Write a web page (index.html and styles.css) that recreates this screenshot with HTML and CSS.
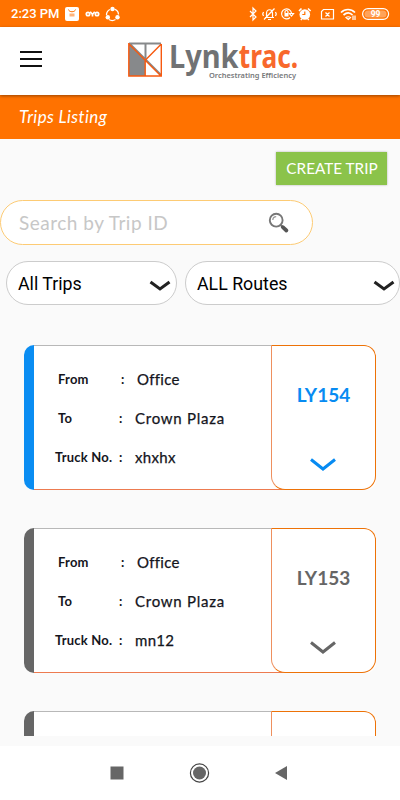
FILE: index.html
```html
<!DOCTYPE html>
<html lang="en">
<head>
<meta charset="utf-8">
<title>Trips Listing</title>
<link rel="stylesheet" href="styles.css">
</head>
<body>
<div class="status">
  <span class="time">2:23 PM</span>
  <svg class="s-left" width="56" height="16" viewBox="0 0 56 16">
    <rect x="1" y="1" width="14" height="14" rx="2" fill="#fff"/>
    <path d="M4.500 3.500c.5 3 6.500 3 7 0" fill="none" stroke="#ff7200" stroke-width="1"/>
    <rect x="5.500" y="7.500" width="5" height="3" fill="#ffb37a"/>
    <g fill="none" stroke="#fff" stroke-width="1.700"><circle cx="24" cy="8" r="1.700"/><path d="M26.200 5.800l2.300 2.700 2.200-2.700M28.500 8v2.500"/><circle cx="33" cy="8" r="1.700"/></g>
    <g fill="none" stroke="#fff" stroke-width="1.300"><path d="M50.500 3.200a6 6 0 0 1 4 5.300M42.500 9a6 6 0 0 1 3.500-5.500M45 13.500a6 6 0 0 0 6.500 0"/></g>
    <circle cx="48.500" cy="3" r="2.200" fill="#fff"/><circle cx="43.800" cy="11.300" r="2.200" fill="#fff"/><circle cx="53.500" cy="11.300" r="2.200" fill="#fff"/>
  </svg>
  <svg class="s-right" width="142" height="16" viewBox="0 0 142 16">
    <g fill="none" stroke="#fff" stroke-width="1.200">
      <path d="M2 5l6 6-3 3V2l3 3-6 6"/>
      <path d="M17 11.500h9M18.500 11V7.500c0-5 6-5 6 0V11M20 13.500h3M16 13.500L26.500 2.500M15.500 6l-.8 2 .8 2M27.500 6l.8 2-.8 2"/>
      <path d="M42 11.500a5 5 0 1 1 1.500-4.500M41.500 7.500h4l-2 2.500z"/>
      <path d="M37 7V6c0-2 3-2 3 0v1"/>
      <path d="M75.500 3.500h10v9.500h-12V5.500zM77.500 6.500l4 4M81.500 6.500l-4 4"/>
      <path d="M93 6.500c4-4 10-4 14 0M95.500 9c3-2.700 6.500-2.700 9 0" stroke-width="1.700"/>
      <path d="M98 11.500c1.500-1 3-1 4.500 0l-2.200 2zM105 9.500v4.500M107 9.500v4.500"/>
      <rect x="114.600" y="2.600" width="26" height="10.800" rx="5.400"/>
    </g>
    <rect x="36.500" y="7" width="4" height="3.500" fill="#fff"/>
    <circle cx="56.800" cy="8.500" r="5.300" fill="#fff"/>
    <path d="M56.800 5.500v3h-2.500" fill="none" stroke="#ff7200" stroke-width="1.200"/>
    <path d="M51 5l2.500-2.500M62.600 5L60 2.500M52.800 14l1-1M60.800 14l-1-1" stroke="#fff" stroke-width="1.600"/>
    <rect x="116.500" y="4.500" width="22" height="7" rx="3.500" fill="#ffa35a"/>
    <text x="127.600" y="11.200" text-anchor="middle" class="battery">99</text>
  </svg>
</div>
<header class="header">
  <div class="menu"><i></i><i></i><i></i></div>
  <div class="logo">
    <svg width="35" height="36" viewBox="0 0 35 36">
      <path d="M1 2v32h16V18z" fill="#87898b"/>
      <path d="M1 1.500h32M17.500 2v17M2 2l31 31" fill="none" stroke="#87898b" stroke-width="2"/>
      <path d="M.800 1v33h32.500V2M17.200 18v16M1 2l32 32M17 18.500L33.300 2" fill="none" stroke="#f7590f" stroke-width="1.400"/>
    </svg>
    <svg class="brand" width="132" height="46" viewBox="0 0 132 46">
      <text x="0" y="29.500" class="word" textLength="69.500" lengthAdjust="spacingAndGlyphs">Lynk</text>
      <text x="69.700" y="29.500" class="word hot" textLength="59.500" lengthAdjust="spacingAndGlyphs">trac.</text>
      <text x="40" y="40" class="tag" textLength="87" lengthAdjust="spacingAndGlyphs">Orchestrating Efficiency</text>
    </svg>
  </div>
</header>
<div class="titlebar"><span>Trips Listing</span></div>
<main class="content">
  <button class="create">CREATE TRIP</button>
  <div class="search">
    <span>Search by Trip ID</span>
    <svg width="22" height="22" viewBox="0 0 22 22"><path d="M12.500 13l2.500 2" stroke="#777" stroke-width="2"/><circle cx="8.200" cy="8.200" r="6.400" fill="#fff" stroke="#777" stroke-width="1.900"/><path d="M4.800 8a3.500 3.500 0 0 1 3.400-3.300" fill="none" stroke="#999" stroke-width="1.300"/><path d="M14.800 15.200l3.600 3.300" stroke="#555" stroke-width="3.800" stroke-linecap="round"/></svg>
  </div>
  <div class="filters">
    <div class="select first"><span>All Trips</span><svg width="22" height="12" viewBox="0 0 22 12"><path d="M1.500 2L11 9l9.500-7"/></svg></div>
    <div class="select second"><span>ALL Routes</span><svg width="22" height="12" viewBox="0 0 22 12"><path d="M1.500 2L11 9l9.500-7"/></svg></div>
  </div>
  <div class="list">
    <article class="card active">
      <div class="rows">
        <div class="row from"><b>From</b><b>:</b><span>Office</span></div>
        <div class="row to"><b>To</b><b>:</b><span class="plaza">Crown Plaza</span></div>
        <div class="row truck"><b>Truck No.</b><b>:</b><span>xhxhx</span></div>
      </div>
      <div class="trip"><strong>LY154</strong><svg width="26" height="14" viewBox="0 0 26 14"><path d="M1 1.500L13 11l12-9.500"/></svg></div>
    </article>
    <article class="card">
      <div class="rows">
        <div class="row from"><b>From</b><b>:</b><span>Office</span></div>
        <div class="row to"><b>To</b><b>:</b><span class="plaza">Crown Plaza</span></div>
        <div class="row truck"><b>Truck No.</b><b>:</b><span>mn12</span></div>
      </div>
      <div class="trip"><strong>LY153</strong><svg width="26" height="14" viewBox="0 0 26 14"><path d="M1 1.500L13 11l12-9.500"/></svg></div>
    </article>
    <article class="card">
      <div class="rows"></div>
      <div class="trip"></div>
    </article>
  </div>
</main>
<nav class="nav">
  <svg width="14" height="14"><rect x=".5" y=".5" width="13" height="13" fill="#666"/></svg>
  <svg width="20" height="20"><circle cx="10.500" cy="10" r="9.100" fill="none" stroke="#444" stroke-width="1.200"/><circle cx="10.500" cy="10" r="6.500" fill="#666"/></svg>
  <svg width="14" height="16"><path d="M13 1v14L1 8z" fill="#666"/></svg>
</nav>
</body>
</html>
```

FILE: styles.css
```css
* { box-sizing: border-box; }
body {
  margin: 0;
  width: 400px;
  height: 800px;
  overflow: hidden;
  display: flex;
  flex-direction: column;
  background: #fafafa;
  font-family: Lato, "Open Sans", sans-serif;
  font-variant-ligatures: none;
  color: #14151c;
}
svg { display: block; flex: none; overflow: visible; }
.status {
  height: 27px;
  flex: none;
  display: flex;
  align-items: center;
  padding: 1px 10px 0 11px;
  background: #ff7200;
  color: #fff;
}
.time { width: 53px; font: 500 13px/16px Roboto, sans-serif; white-space: nowrap; }
.s-right { margin-left: auto; }
.battery { font: 700 8.5px Roboto, sans-serif; fill: #fff; }
.header {
  height: 68px;
  flex: none;
  display: flex;
  background: #fff;
  box-shadow: 0 1px 3px rgba(0, 0, 0, .4);
  position: relative;
}
.menu {
  margin: 24px 0 0 20px;
  width: 22px;
  height: 16px;
  display: flex;
  flex-direction: column;
  justify-content: space-between;
}
.menu i { height: 2px; background: #111; }
.logo { display: flex; margin: 15px 0 0 86px; }
.brand { margin: -4px 0 0 6px; }
.word { font: 700 32px "Noto Sans", sans-serif; fill: #707274; }
.hot { fill: #f8682c; }
.tag { font: 600 7.5px "Noto Sans", sans-serif; fill: #77797b; }
.titlebar {
  height: 44px;
  flex: none;
  padding: 11px 19px;
  background: #ff7200;
  color: #fff;
  font-size: 17px;
  line-height: 21px;
  font-style: italic;
  letter-spacing: .4px;
}
.content { flex: 1; min-height: 0; padding-top: 13px; display: flex; flex-direction: column; }
.create {
  align-self: flex-end;
  flex: none;
  width: 111px;
  height: 33px;
  margin-right: 13px;
  padding: 0 0 2px 1px;
  border: 0;
  background: #8bc34a;
  box-shadow: 0 0 2px rgba(0, 0, 0, .3);
  color: #fff;
  font: 400 15.3px Lato, sans-serif;
}
.search {
  flex: none;
  width: 313px;
  height: 45px;
  margin-top: 15px;
  padding: 0 22px 0 18px;
  display: flex;
  align-items: center;
  justify-content: space-between;
  border: 1px solid #fdcb74;
  border-radius: 23px;
  background: #fff;
  color: #c7c7c7;
  font-size: 19px;
  letter-spacing: .5px;
}
.filters { display: flex; gap: 8px; padding-left: 6px; margin-top: 16px; flex: none; }
.select {
  height: 44px;
  border: 1px solid #ccc;
  border-radius: 22px;
  background: #fff;
  display: flex;
  align-items: center;
  justify-content: space-between;
  padding: 1px 5px 0 11px;
  font: 400 17.8px Roboto, sans-serif;
  color: #000;
}
.select svg { margin-top: 5px; }
.select path { fill: none; stroke: #222; stroke-width: 3; }
.first { width: 171px; }
.second { width: 215px; padding-right: 4px; }
.list {
  margin-top: 40px;
  height: 391px;
  flex: none;
  overflow: hidden;
  padding: 0 24px;
  display: flex;
  flex-direction: column;
  gap: 38px;
}
.card {
  height: 145px;
  flex: none;
  display: flex;
  overflow: hidden;
  border-radius: 10px;
  background: linear-gradient(to right, #666 10px, #fff 10px);
  --tone: #666;
}
.card.active { background: linear-gradient(to right, #0a8df2 10px, #fff 10px); --tone: #078bf2; }
.rows {
  width: 251px;
  flex: none;
  margin: 0 -14px 0 10px;
  padding-top: 13px;
  border-top: 1px solid #b8b8b8;
  border-bottom: 1px solid #ed7b50;
}
.row { height: 39px; display: grid; grid-template-columns: 63px 16px 1fr; align-items: center; white-space: nowrap; }
.row b { font-size: 13px; font-weight: 700; letter-spacing: .2px; }
.row span { font-size: 15px; letter-spacing: .3px; -webkit-text-stroke: .25px; }
.row .plaza { letter-spacing: .75px; }
.from { padding-left: 24px; }
.to { padding-left: 24px; grid-template-columns: 61px 16px 1fr; }
.truck { padding-left: 21px; grid-template-columns: 64px 16px 1fr; }
.trip {
  width: 105px;
  flex: none;
  border: 1px solid #ed7207;
  border-left-color: #ee905f;
  border-radius: 0 12px 14px 14px;
  padding-top: 37px;
  display: flex;
  flex-direction: column;
  align-items: center;
  color: var(--tone);
  background: #fff;
}
.trip strong { font-size: 19px; line-height: 24px; font-weight: 700; }
.trip svg { margin: 51px 1px 0 0; }
.trip path { fill: none; stroke: var(--tone); stroke-width: 3; }
.nav {
  height: 54px;
  flex: none;
  background: #fff;
  display: flex;
  align-items: center;
  justify-content: space-between;
  padding: 0 112px 0 110px;
}
```
